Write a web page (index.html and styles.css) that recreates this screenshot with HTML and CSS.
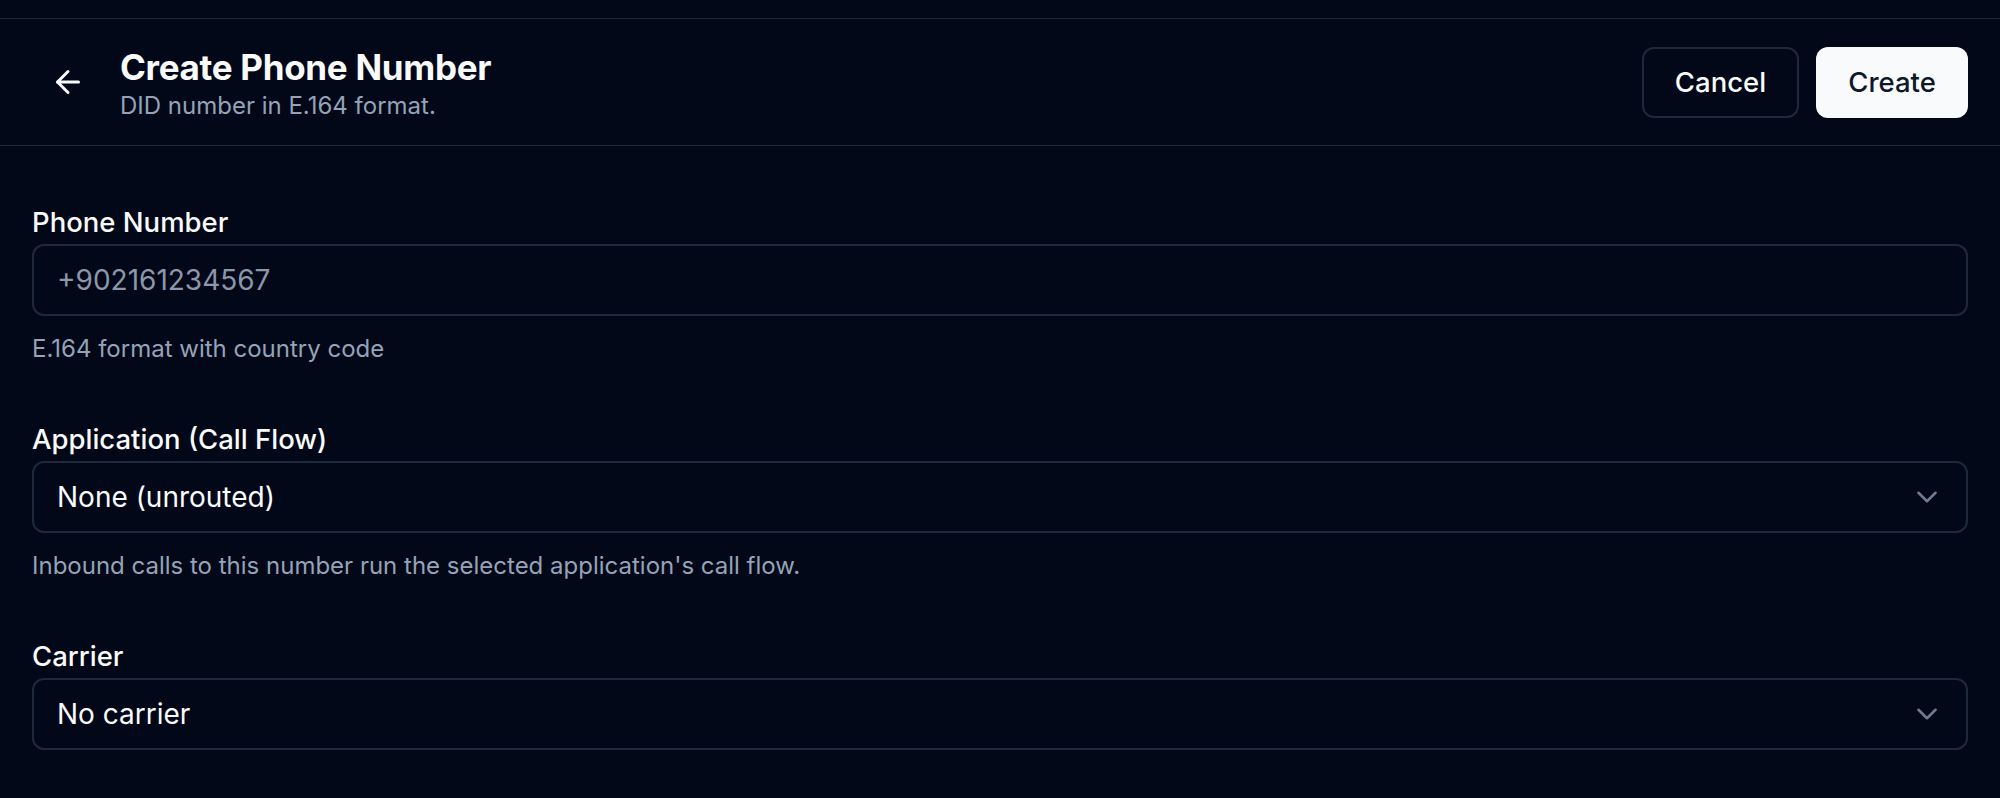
FILE: index.html
```html
<!DOCTYPE html>
<html lang="en">
<head>
<meta charset="utf-8">
<title>Create Phone Number</title>
<link rel="stylesheet" href="styles.css">
</head>
<body>
<div class="topstrip"></div>
<header class="page-header">
  <div class="header-left">
    <button class="back-btn" aria-label="Back">
      <svg width="36" height="36" viewBox="0 0 24 24" fill="none" stroke="currentColor" stroke-width="2" stroke-linecap="round" stroke-linejoin="round"><path d="m12 19-7-7 7-7"/><path d="M19 12H5"/></svg>
    </button>
    <div class="title-block">
      <h1 class="title">Create Phone Number</h1>
      <p class="subtitle">DID number in E.164 format.</p>
    </div>
  </div>
  <div class="header-actions">
    <button class="btn btn-outline">Cancel</button>
    <button class="btn btn-primary">Create</button>
  </div>
</header>
<main class="form">
  <div class="field">
    <label class="label">Phone Number</label>
    <div class="input"><span class="placeholder">+902161234567</span></div>
    <p class="help">E.164 format with country code</p>
  </div>
  <div class="field">
    <label class="label">Application (Call Flow)</label>
    <div class="input select"><span class="value">None (unrouted)</span>
      <svg class="chev" width="34" height="34" viewBox="0 0 24 24" fill="none" stroke="currentColor" stroke-width="1.8" stroke-linecap="round" stroke-linejoin="round"><path d="m6 9 6 6 6-6"/></svg>
    </div>
    <p class="help">Inbound calls to this number run the selected application's call flow.</p>
  </div>
  <div class="field">
    <label class="label">Carrier</label>
    <div class="input select"><span class="value">No carrier</span>
      <svg class="chev" width="34" height="34" viewBox="0 0 24 24" fill="none" stroke="currentColor" stroke-width="1.8" stroke-linecap="round" stroke-linejoin="round"><path d="m6 9 6 6 6-6"/></svg>
    </div>
  </div>
</main>
</body>
</html>
```
FILE: styles.css
```css
* { box-sizing: border-box; }
html, body { margin: 0; padding: 0; }
body {
  background: #020817;
  color: #f8fafc;
  font-family: Inter, "Liberation Sans", sans-serif;
  height: 798px;
  overflow: hidden;
}
.topstrip {
  height: 19px;
  border-bottom: 1px solid #1e293b;
}
.page-header {
  height: 127px;
  border-bottom: 1px solid #1e293b;
  display: flex;
  align-items: center;
  justify-content: space-between;
  padding: 0 32px 0 39px;
}
.header-left {
  display: flex;
  align-items: center;
  gap: 23px;
}
.back-btn {
  width: 58px;
  height: 58px;
  display: flex;
  align-items: center;
  justify-content: center;
  background: transparent;
  border: none;
  color: #f8fafc;
  padding: 0;
  border-radius: 10px;
}
.title-block { display: flex; flex-direction: column; padding-top: 2px; }
.title {
  margin: 0;
  font-size: 35px;
  line-height: 46px;
  font-weight: 700;
  letter-spacing: -0.3px;
}
.subtitle {
  margin: 0;
  font-size: 24px;
  line-height: 32px;
  color: #94a3b8;
}
.header-actions { display: flex; gap: 17px; }
.btn {
  height: 71px;
  border-radius: 12px;
  font-family: inherit;
  font-size: 27.5px;
  font-weight: 500;
  padding: 0;
}
.btn-outline {
  width: 157px;
  background: #020817;
  color: #f8fafc;
  border: 2px solid #1e293b;
}
.btn-primary {
  width: 152px;
  background: #f8fafc;
  color: #0f172a;
  border: none;
}
.form {
  padding: 58px 32px 0;
  display: flex;
  flex-direction: column;
  gap: 57px;
}
.field { display: flex; flex-direction: column; }
.label {
  font-size: 27.5px;
  line-height: 36px;
  font-weight: 500;
  margin-bottom: 4px;
}
.input {
  height: 72px;
  border: 2px solid #1e293b;
  border-radius: 12px;
  display: flex;
  align-items: center;
  justify-content: space-between;
  padding: 0 22px 0 23px;
  font-size: 28px;
}
.placeholder { color: #8b97ab; }
.value { color: #f8fafc; }
.chev { color: #94a3b8; opacity: 0.75; }
.help {
  margin: 17px 0 0;
  font-size: 24px;
  line-height: 31px;
  color: #94a3b8;
}
```
